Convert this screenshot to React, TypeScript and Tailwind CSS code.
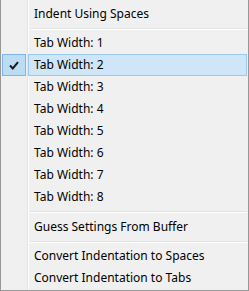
const groups: { label: string; checked?: boolean }[][] = [
  [{ label: "Indent Using Spaces" }],
  [
    { label: "Tab Width: 1" },
    { label: "Tab Width: 2", checked: true },
    { label: "Tab Width: 3" },
    { label: "Tab Width: 4" },
    { label: "Tab Width: 5" },
    { label: "Tab Width: 6" },
    { label: "Tab Width: 7" },
    { label: "Tab Width: 8" },
  ],
  [{ label: "Guess Settings From Buffer" }],
  [{ label: "Convert Indentation to Spaces" }, { label: "Convert Indentation to Tabs" }],
];

const sepHeights = ["", "h-[7px]", "h-[8px]", "h-[7px]"];

function Item({ label, checked }: { label: string; checked?: boolean }) {
  return (
    <div className="flex h-[22px]">
      <div
        className={
          checked
            ? "flex w-[24px] items-center justify-center border border-[#7eb4ea] bg-[#bcdcf4]"
            : "w-[24px]"
        }
      >
        {checked && (
          <svg width="10" height="9" viewBox="0 0 10 9">
            <path d="M1 4.5 L3.8 7.5 L9 1.2" fill="none" stroke="#1a1a1a" strokeWidth="2" />
          </svg>
        )}
      </div>
      <div
        className={
          "ml-[2px] flex flex-1 items-center pl-[5px] border " +
          (checked ? "border-[#9ac9ef] bg-[#cfe5f8]" : "border-transparent")
        }
      >
        <span className="text-[12px] leading-none text-black">{label}</span>
      </div>
    </div>
  );
}

export default function App() {
  return (
    <div
      className="w-[249px] h-[291px] overflow-hidden bg-[#f0f0f0]"
      style={{ fontFamily: '"Noto Sans", "Open Sans", sans-serif' }}
    >
      <div className="h-full border-x border-b border-[#979797] px-[1px] pt-[3px] bg-[linear-gradient(to_right,transparent_26px,#e2e3e3_26px,#e2e3e3_27px,#ffffff_27px,#ffffff_28px,transparent_28px)]">
        {groups.map((g, gi) => (
          <div key={gi}>
            {gi > 0 && (
              <div className={"flex flex-col justify-center pl-[28px] " + sepHeights[gi]}>
                <div className="h-[1px] bg-[#e2e3e3]" />
                <div className="h-[1px] bg-white" />
              </div>
            )}
            {g.map((it) => (
              <Item key={it.label} {...it} />
            ))}
          </div>
        ))}
      </div>
    </div>
  );
}
